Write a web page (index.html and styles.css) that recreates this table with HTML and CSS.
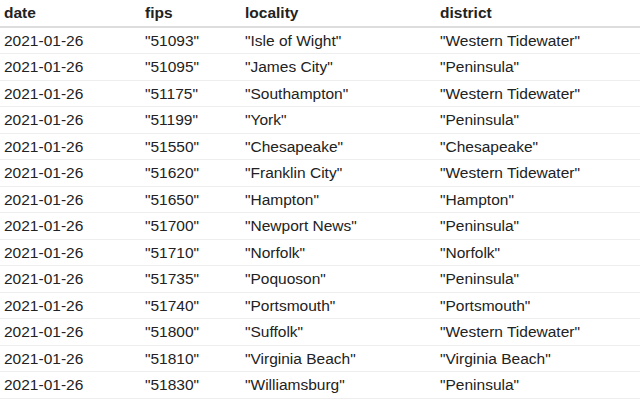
FILE: index.html
```html
<!DOCTYPE html>
<html>
<head>
<meta charset="utf-8">
<link rel="stylesheet" href="styles.css">
</head>
<body>
<table class="data">
  <colgroup>
    <col class="c-date"><col class="c-fips"><col class="c-loc"><col class="c-dist">
  </colgroup>
  <thead>
    <tr><th>date</th><th>fips</th><th>locality</th><th>district</th></tr>
  </thead>
  <tbody>
    <tr><td>2021-01-26</td><td>"51093"</td><td>"Isle of Wight"</td><td>"Western Tidewater"</td></tr>
    <tr><td>2021-01-26</td><td>"51095"</td><td>"James City"</td><td>"Peninsula"</td></tr>
    <tr><td>2021-01-26</td><td>"51175"</td><td>"Southampton"</td><td>"Western Tidewater"</td></tr>
    <tr><td>2021-01-26</td><td>"51199"</td><td>"York"</td><td>"Peninsula"</td></tr>
    <tr><td>2021-01-26</td><td>"51550"</td><td>"Chesapeake"</td><td>"Chesapeake"</td></tr>
    <tr><td>2021-01-26</td><td>"51620"</td><td>"Franklin City"</td><td>"Western Tidewater"</td></tr>
    <tr><td>2021-01-26</td><td>"51650"</td><td>"Hampton"</td><td>"Hampton"</td></tr>
    <tr><td>2021-01-26</td><td>"51700"</td><td>"Newport News"</td><td>"Peninsula"</td></tr>
    <tr><td>2021-01-26</td><td>"51710"</td><td>"Norfolk"</td><td>"Norfolk"</td></tr>
    <tr><td>2021-01-26</td><td>"51735"</td><td>"Poquoson"</td><td>"Peninsula"</td></tr>
    <tr><td>2021-01-26</td><td>"51740"</td><td>"Portsmouth"</td><td>"Portsmouth"</td></tr>
    <tr><td>2021-01-26</td><td>"51800"</td><td>"Suffolk"</td><td>"Western Tidewater"</td></tr>
    <tr><td>2021-01-26</td><td>"51810"</td><td>"Virginia Beach"</td><td>"Virginia Beach"</td></tr>
    <tr><td>2021-01-26</td><td>"51830"</td><td>"Williamsburg"</td><td>"Peninsula"</td></tr>
  </tbody>
</table>
</body>
</html>
```

FILE: styles.css
```css
html, body {
  margin: 0;
  padding: 0;
  background: #fff;
}
body {
  font-family: "Liberation Sans", Arial, sans-serif;
  font-size: 15.5px;
  color: #222;
}
.data {
  width: 100%;
  border-collapse: collapse;
  table-layout: fixed;
}
.c-date { width: 141px; }
.c-fips { width: 100px; }
.c-loc { width: 195px; }
.data th {
  text-align: left;
  font-weight: bold;
  padding: 4px 4px 4.5px 4px;
  line-height: 17px;
  border-bottom: 2px solid #ddd;
}
.data td {
  padding: 4px 4px 4.5px 4px;
  line-height: 17px;
  border-bottom: 1px solid #eee;
  white-space: nowrap;
}
```
